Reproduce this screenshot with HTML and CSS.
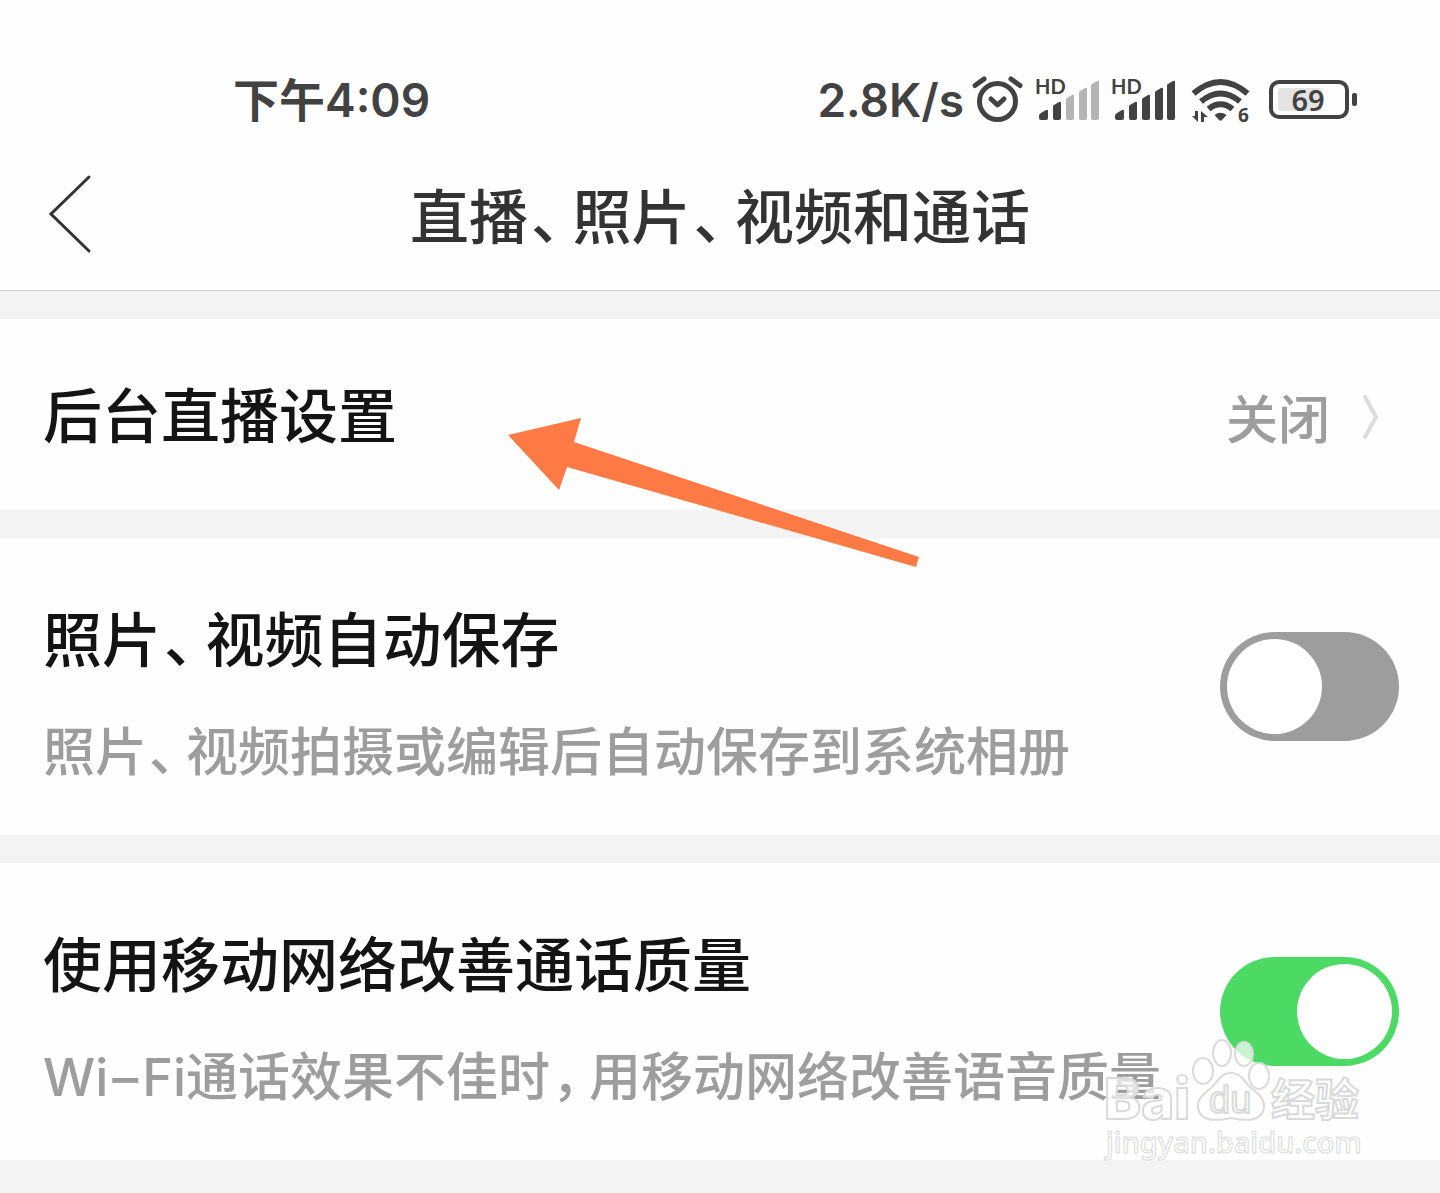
FILE: index.html
```html
<!DOCTYPE html>
<html lang="zh-CN">
<head>
<meta charset="utf-8">
<meta name="viewport" content="width=device-width, initial-scale=1">
<title>直播、照片、视频和通话</title>
<link rel="stylesheet" href="styles.css">
</head>
<body>
<header class="top">
  <div class="status">
    <span class="clock">下午4:09</span>
    <div class="indicators">
      <span class="speed">2.8K/s</span>
      <svg class="alarm" width="51" height="50" viewBox="0 0 51 50" fill="none" stroke="#424242" stroke-width="5" aria-hidden="true">
        <circle cx="25.500" cy="26.500" r="18"/>
        <path d="M3 10.500 12 4M39 4l9 6.500" stroke-linecap="round"/>
        <path d="M19 24l6.500 6 6.500-6" stroke-linecap="round" stroke-linejoin="round"/>
      </svg>
      <svg class="signal" width="64" height="50" viewBox="0 0 64 50" fill="#424242" aria-hidden="true">
        <text class="hd" x="0" y="19">HD</text>
        <path d="M4 41q0-2 2-3l5-3q2-1 2 1v7q0 2-2 2H6q-2 0-2-2zM18 32q0-2 1-2l5-3q2-1 2 1v15q0 2-2 2h-4q-2 0-2-2z"/>
        <path fill="#b5b5b5" d="M31 25q0-2 1-2l5-3q2-1 2 1v22q0 2-2 2h-4q-2 0-2-2zM44 18q0-2 1-2l5-3q2-1 2 1v29q0 2-2 2h-4q-2 0-2-2zM56 11q0-2 1-2l5-3q2-1 2 1v36q0 2-2 2h-4q-2 0-2-2z"/>
      </svg>
      <svg class="signal" width="64" height="50" viewBox="0 0 64 50" fill="#424242" aria-hidden="true">
        <text class="hd" x="0" y="19">HD</text>
        <path d="M4 41q0-2 2-3l5-3q2-1 2 1v7q0 2-2 2H6q-2 0-2-2zM18 32q0-2 1-2l5-3q2-1 2 1v15q0 2-2 2h-4q-2 0-2-2zM31 25q0-2 1-2l5-3q2-1 2 1v22q0 2-2 2h-4q-2 0-2-2zM44 18q0-2 1-2l5-3q2-1 2 1v29q0 2-2 2h-4q-2 0-2-2zM56 11q0-2 1-2l5-3q2-1 2 1v36q0 2-2 2h-4q-2 0-2-2z"/>
      </svg>
      <svg class="wifi" width="61" height="50" viewBox="0 0 61 50" fill="none" stroke="#424242" stroke-width="6" aria-hidden="true">
        <path d="M2.500 18.500Q29.500-4.500 56.500 18.500M10 26.500Q29.500 10.500 49 26.500M17.500 34Q29.500 24.500 41.500 34"/>
        <path d="M23.500 40q6-4.500 12 0l-4.500 5q-1.500 1.300-3 0z" fill="#424242" stroke="none"/>
        <path d="M4 36h3v11l-6-6h3zM10 47V36l7 6h-4v5z" fill="#424242" stroke="none"/>
        <text class="band" x="47" y="47">6</text>
      </svg>
      <svg class="battery" width="88" height="50" viewBox="0 0 88 50" aria-hidden="true">
        <rect x="9" y="13" width="44" height="23" rx="3" fill="#e3e3e3"/>
        <rect x="2" y="7" width="76" height="35" rx="8" fill="none" stroke="#424242" stroke-width="4"/>
        <rect x="83" y="18" width="5" height="13" rx="2" fill="#424242"/>
        <text class="level" x="39" y="36" text-anchor="middle">69</text>
      </svg>
    </div>
  </div>
  <nav class="bar">
    <button class="back" type="button" aria-label="返回">
      <svg width="44" height="80" viewBox="0 0 44 80" fill="none" stroke="#333" stroke-width="3" stroke-linecap="round"><path d="M41 3 3 40l38 37"/></svg>
    </button>
    <h1 class="heading">直播<span class="mark">、</span>照片<span class="mark">、</span>视频和通话</h1>
  </nav>
</header>
<main class="list">
  <section class="item front">
    <button class="row link" type="button">
      <span class="title">后台直播设置</span>
      <span class="value">关闭
        <svg width="18" height="46" viewBox="0 0 18 46" fill="none" stroke="#dcdcdc" stroke-width="4" stroke-linecap="round"><path d="M3 3l11 20L3 43"/></svg>
      </span>
    </button>
    <svg class="pointer" width="411" height="149" viewBox="0 0 411 149" fill="#ff7a45" aria-hidden="true"><path d="M0 17 73 0l-7 24 345 115-3 10L59 49l-8 23z"/></svg>
  </section>
  <section class="item">
    <label class="row">
      <span class="text">
        <span class="title">照片<span class="mark">、</span>视频自动保存</span>
        <span class="note">照片<span class="mark">、</span>视频拍摄或编辑后自动保存到系统相册</span>
      </span>
      <input class="switch" type="checkbox" role="switch">
    </label>
  </section>
  <section class="item">
    <label class="row">
      <span class="text">
        <span class="title">使用移动网络改善通话质量</span>
        <span class="note">Wi<span class="dash">–</span>Fi通话效果不佳时<span class="mark">，</span>用移动网络改善语音质量</span>
      </span>
      <input class="switch" type="checkbox" role="switch" checked>
    </label>
    <svg class="watermark" width="262" height="126" viewBox="0 0 262 126" aria-hidden="true">
      <g class="paw">
        <ellipse cx="23" cy="33" rx="10" ry="13"/>
        <ellipse cx="42" cy="15" rx="9" ry="13"/>
        <ellipse cx="64" cy="16" rx="9" ry="12"/>
        <ellipse cx="79" cy="38" rx="10" ry="13"/>
        <path d="M51 35c-11 0-13 9-20 15-9 7-14 12-13 20 2 12 14 14 33 10 19 4 31 2 33-10 1-8-4-13-13-20-7-6-9-15-20-15z"/>
      </g>
      <text class="brand" x="0" y="81">Bai</text>
      <text class="du" x="105" y="75">du</text>
      <text class="cn" x="167" y="78">经验</text>
      <text class="url" x="2" y="115">jingyan.baidu.com</text>
    </svg>
  </section>
</main>
</body>
</html>
```
FILE: styles.css
```css
* { box-sizing: border-box; }

body {
  margin: 0;
  background: #f3f3f3;
  font-family: Inter, "Noto Sans CJK SC", sans-serif;
  font-weight: 500;
}

svg { display: block; flex: none; overflow: visible; }

button {
  border: 0;
  padding: 0;
  background: none;
  font: inherit;
  color: inherit;
  text-align: left;
}

.top {
  background: #fefefe;
  border-bottom: 1px solid #d0d0d0;
}

.status {
  display: flex;
  justify-content: space-between;
  align-items: center;
  padding: 75px 83px 0 233px;
  height: 125px;
  color: #424242;
  font-size: 46px;
  font-weight: 600;
  line-height: 50px;
}

.indicators { display: flex; align-items: center; }
.alarm { margin: 0 12px 0 8px; }
.signal { margin-right: 12px; }
.wifi { margin: 0 17px 0 4px; }
.hd { font: 700 20px Lato, sans-serif; }
.band { font: 700 19px "Noto Sans", sans-serif; fill: #424242; stroke: none; }
.level { font: 600 29px "Noto Sans", sans-serif; fill: #424242; }

.bar {
  display: grid;
  grid-template-columns: 1fr auto 1fr;
  align-items: center;
  height: 165px;
  padding: 13px 48px 0;
}

.back { justify-self: start; }

.heading {
  margin: 0;
  padding-top: 8px;
  color: #333;
  font-size: 59px;
  font-weight: 500;
  line-height: 80px;
}

/* punctuation takes three quarters of a character cell */
.mark { margin: 0 12px 0 3px; font-feature-settings: "halt"; }
.note .mark { margin: 0 11px 0 2px; }
.dash { margin: 0 4px; }

.list {
  display: flex;
  flex-direction: column;
  gap: 28px;
  padding: 28px 0 33px;
}

.item { position: relative; background: #fefefe; }
.front { z-index: 1; }

.row {
  display: flex;
  justify-content: space-between;
  align-items: center;
  width: 100%;
  min-height: 297px;
  padding: 0 41px 0 43px;
}

.link { min-height: 191px; padding: 4px 60px 0 43px; }

.text {
  display: flex;
  flex-direction: column;
  gap: 32px;
  padding-top: 21px;
}

.title { color: #141414; font-size: 59px; line-height: 80px; }
.note { color: #9d9d9d; font-size: 52px; line-height: 80px; }

.value {
  display: flex;
  align-items: center;
  gap: 32px;
  color: #9d9d9d;
  font-size: 52px;
}

.switch {
  appearance: none;
  flex: none;
  display: flex;
  width: 179px;
  height: 109px;
  margin: 0;
  padding: 7px;
  border-radius: 55px;
  background: #9d9d9d;
}

.switch::before {
  content: "";
  width: 95px;
  height: 95px;
  border-radius: 50%;
  background: #fff;
}

.switch:checked { justify-content: flex-end; background: #4cd964; }

.pointer { position: absolute; top: 99px; left: 508px; }

.watermark {
  position: absolute;
  right: 74px;
  bottom: -4px;
  fill: rgba(255, 255, 255, 0.7);
  stroke: #dadada;
  stroke-width: 2px;
  pointer-events: none;
}

.paw { transform: translateX(76px); }
.brand { font: 800 56px Inter, sans-serif; }
.du { font: 500 38px "Liberation Sans", sans-serif; }
.cn { font: 700 44px "Noto Sans CJK SC", sans-serif; }
.url { font: 500 29px "Noto Sans", sans-serif; stroke-width: 1px; }
```
